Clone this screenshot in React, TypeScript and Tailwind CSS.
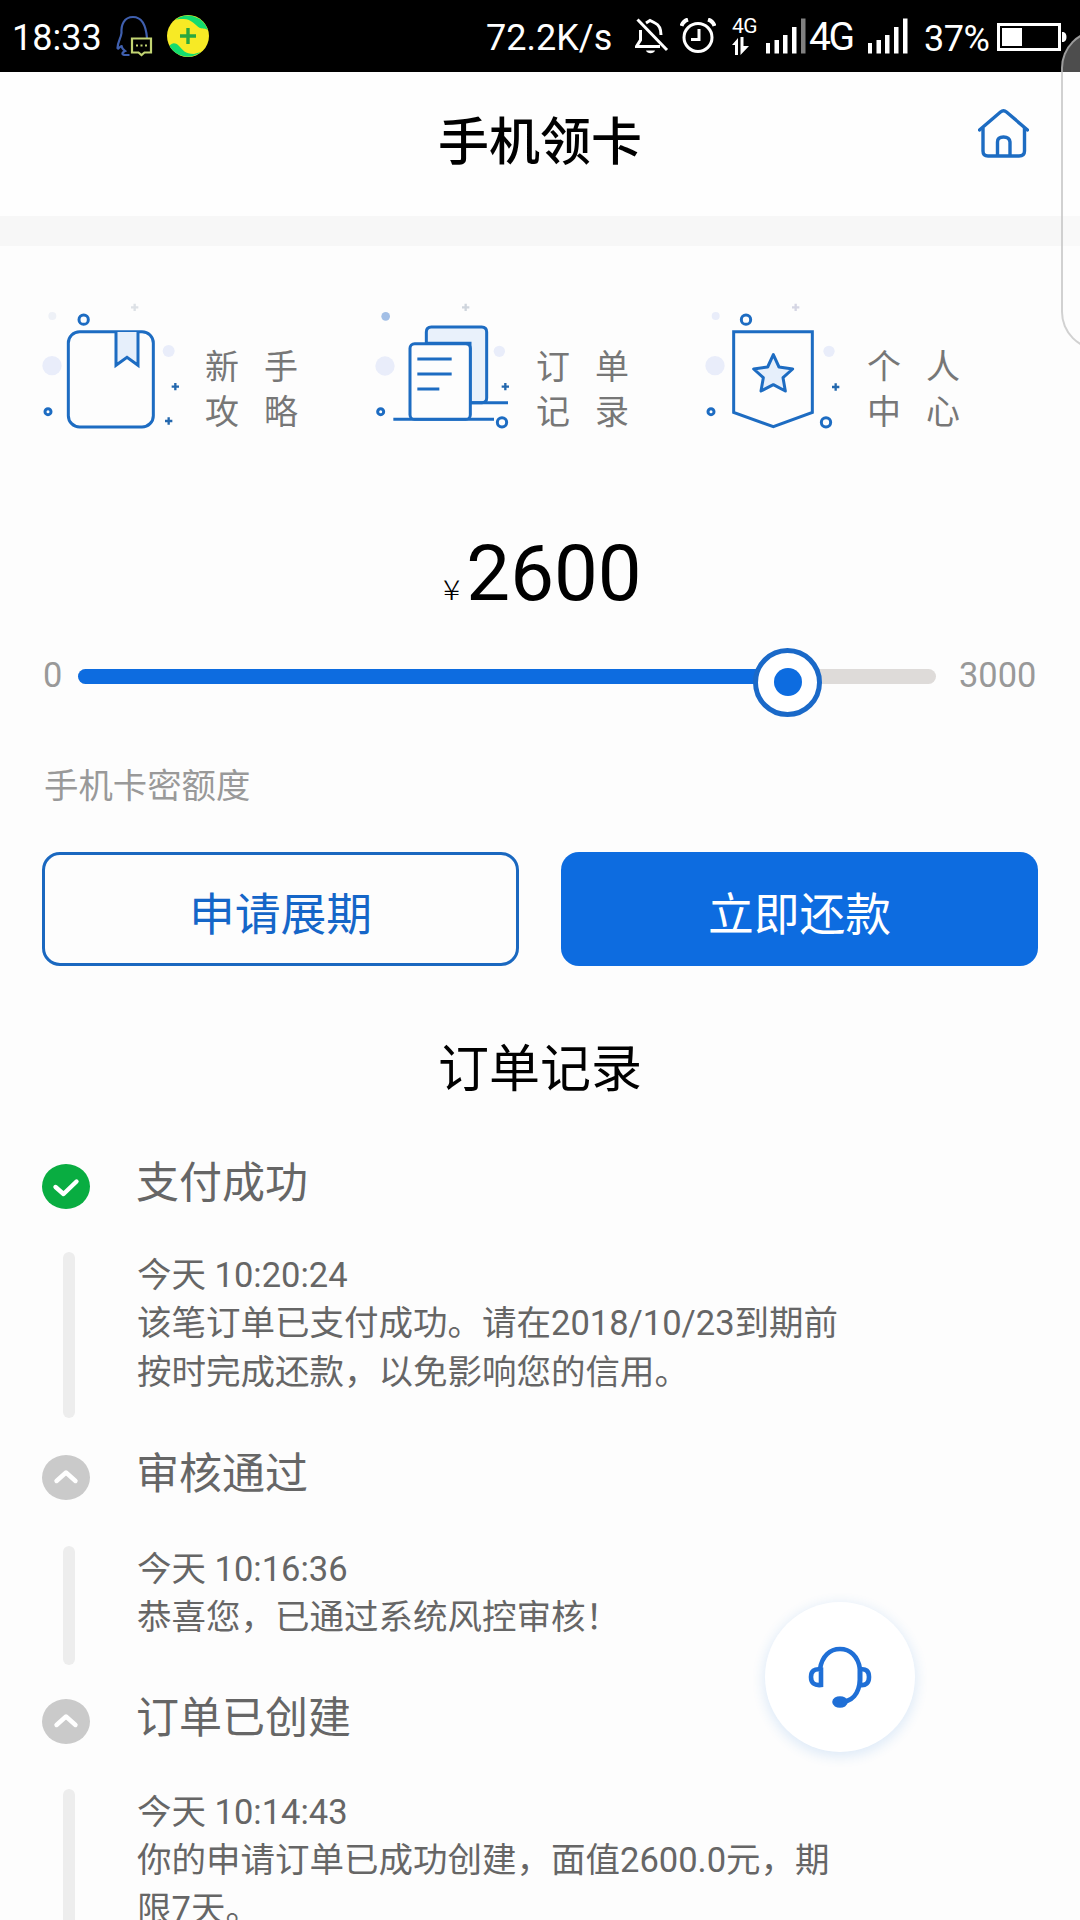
import { ReactNode } from "react";

const orders = [
  {
    id: 1,
    title: "支付成功",
    time: "今天 10:20:24",
    lines: ["该笔订单已支付成功。请在2018/10/23到期前", "按时完成还款，以免影响您的信用。"],
    done: true,
    head: "h-[88px]",
    bar: "h-[166px]",
    wrap: "h-[291px]",
  },
  {
    id: 2,
    title: "审核通过",
    time: "今天 10:16:36",
    lines: ["恭喜您，已通过系统风控审核！"],
    done: false,
    head: "h-[91px]",
    bar: "h-[119px]",
    wrap: "h-[244px]",
  },
  {
    id: 3,
    title: "订单已创建",
    time: "今天 10:14:43",
    lines: ["你的申请订单已成功创建，面值2600.0元，期", "限7天。"],
    done: false,
    head: "h-[90px]",
    bar: "h-[166px]",
    wrap: "h-[291px]",
  },
];

function SignalBars({ weak }: { weak?: boolean }) {
  return (
    <svg width="40" height="36" viewBox="0 0 40 36" fill="#fff">
      <rect x="0" y="25" width="4" height="10.5" />
      <rect x="8.5" y="22" width="4.5" height="13.5" />
      <rect x="17" y="17" width="4.5" height="18.5" />
      <rect x="26" y="9" width="4.5" height="26.5" />
      <rect x="35" y="0.5" width="4.5" height="35" fill={weak ? "#808080" : "#fff"} />
    </svg>
  );
}

function StatusBar() {
  return (
    <div className="flex h-[72px] items-center justify-between bg-black pl-[12px] pr-[12px] text-[36px] leading-none text-white">
      <div className="flex items-center">
        <span className="w-[104px] pt-[4px]">18:33</span>
        <svg width="38" height="42" viewBox="0 0 38 42" fill="none">
          <path
            d="M31 23C30 11 26 2 17 2C8 2 5 10 5.500 18C5 23 1.500 27 1.500 33C2.500 35 4 31 5.500 31C6 34 7.500 35 9 36C5 38 6 40 9.500 40H13.500"
            stroke="#3f5fae"
            strokeWidth="2.2"
          />
          <path d="M16 23.500H35V37.500H28.500L25.500 40L22.500 37.500H16Z" stroke="#c2d472" strokeWidth="2.2" />
          <path d="M20 30.500H22M24.500 30.500H26.500M29 30.500H31" stroke="#c2d472" strokeWidth="2" />
        </svg>
        <svg className="ml-[13px]" width="42" height="42" viewBox="0 0 42 42">
          <circle cx="21" cy="21" r="21" fill="#f7ea25" />
          <path d="M8 5A21 21 0 0 1 41 15C38 13 36 14 33 13C28 10 24 3 15 4C12 4 10 4 8 5Z" fill="#13dc6e" />
          <path d="M34 37A21 21 0 0 1 2.500 31C5 27 9 28 11 30C16 35 18 39 27 39Z" fill="#13dc6e" />
          <path d="M21 13V29M13 21H29" stroke="#2aa83f" strokeWidth="3.4" />
        </svg>
      </div>
      <div className="flex items-center">
        <span className="w-[149px] pt-[4px]">72.2K/s</span>
        <svg width="34" height="36" viewBox="0 0 34 36" fill="none" stroke="#fff" strokeWidth="3">
          <path d="M2.500 1.500L32 32" />
          <path d="M11 5L15 2.500L20 5C24.500 7 26 11 26 17" />
          <path d="M5.500 12V22L1.500 28.500H25" />
          <path d="M11 32.500H20C19 36 12 36 11 32.500Z" fill="#fff" stroke="none" />
        </svg>
        <svg className="ml-[11px]" width="36" height="36" viewBox="0 0 36 36" fill="none" stroke="#fff" strokeWidth="3">
          <circle cx="18" cy="19.500" r="14" />
          <path d="M19 11V21.500H11" />
          <path d="M1.500 8Q3 3 8 1.500M28 1.500Q33 3 34.500 8" strokeWidth="4" />
        </svg>
        <div className="ml-[16px] flex h-[38px] w-[34px] flex-col">
          <span className="text-[21px] leading-[19px] tracking-tight">4G</span>
          <svg className="mt-px" width="18" height="18" viewBox="0 0 18 18" fill="#fff">
            <path d="M0 8L6 1V18H3V8Z" />
            <path d="M8.500 0H11.500V9H17L8.500 18Z" />
          </svg>
        </div>
        <SignalBars weak />
        <span className="ml-[3px] w-[59px] pt-[2px] text-[39px] tracking-[-2.500px]">4G</span>
        <SignalBars />
        <span className="ml-[16px] w-[73px] pt-[5px] text-[36px] tracking-[-0.500px]">37%</span>
        <svg className="mt-[2px]" width="71" height="28" viewBox="0 0 71 28" fill="none">
          <rect x="1.500" y="1.500" width="61" height="25" stroke="#fff" strokeWidth="3" />
          <rect x="5" y="5" width="20" height="18" fill="#fff" />
          <path d="M65 9H66.500Q69.500 10 69.500 14T66.500 19H65Z" fill="#fff" />
        </svg>
      </div>
    </div>
  );
}

function Plus({ x, y, color = "#2468ae" }: { x: number; y: number; color?: string }) {
  return <path d={`M${x - 11} ${y}h22M${x} ${y - 11}v22`} stroke={color} strokeWidth="7" fill="none" />;
}

function GuideIcon() {
  return (
    <svg width="143" height="133" viewBox="60 30 429 399" fill="none" stroke="#1d6cc2" strokeWidth="9">
      <g stroke="none" fill="#e9edfa">
        <circle cx="97" cy="78" r="12" fill="#eef1f7" />
        <circle cx="96" cy="227" r="29" />
        <circle cx="446" cy="183" r="18" />
      </g>
      <rect x="145" y="125" width="255" height="286" rx="34" />
      <path d="M288 126V226L321 202L354 226V126" fill="#e6effb" />
      <circle cx="191" cy="89" r="14" />
      <circle cx="84" cy="365" r="9" />
      <Plus x={344} y={52} color="#dde1e6" />
      <Plus x={466} y={290} />
      <Plus x={446} y={393} />
    </svg>
  );
}

function OrderIcon() {
  return (
    <svg width="143" height="133" viewBox="63 30 429 399" fill="none" stroke="#1d6cc2" strokeWidth="9">
      <g stroke="none" fill="#e9edfa">
        <circle cx="107" cy="79" r="13" fill="#a3bfe6" />
        <circle cx="105" cy="228" r="29" />
        <circle cx="448" cy="184" r="17" />
      </g>
      <path d="M229 160V126Q229 111 244 111H395Q410 111 410 126V324Q410 338 396 338H360V160Z" fill="#e9f1fb" />
      <path d="M360 338H474M130 388H432" />
      <rect x="180" y="161" width="181" height="227" rx="14" fill="#fdfdfd" />
      <path d="M202 207H305M202 252H305M202 297H268" />
      <circle cx="92" cy="365" r="9" />
      <circle cx="456" cy="397" r="14" />
      <Plus x={347} y={52} color="#cfd5dd" />
      <Plus x={466} y={290} />
    </svg>
  );
}

function ProfileIcon() {
  return (
    <svg width="143" height="133" viewBox="66 30 429 399" fill="none" stroke="#1d6cc2" strokeWidth="9">
      <g stroke="none" fill="#e9edfa">
        <circle cx="107" cy="78" r="12" />
        <circle cx="105" cy="227" r="29" />
        <circle cx="447" cy="184" r="17" />
      </g>
      <path d="M161 125H397V367L280 410L161 367Z" />
      <path
        d="M280 194L297 231L338 237L309 263L316 303L280 284L243 303L250 263L221 237L263 231Z"
        fill="#e6effb"
        strokeLinejoin="round"
      />
      <circle cx="198" cy="89" r="14" />
      <circle cx="93" cy="365" r="9" />
      <circle cx="438" cy="397" r="14" />
      <Plus x={347} y={52} color="#d5d6e4" />
      <Plus x={467} y={291} />
    </svg>
  );
}

function NavItem({ icon, lines }: { icon: ReactNode; lines: string[] }) {
  return (
    <div className="flex w-[331px]">
      {icon}
      <div className="ml-[22px] mt-[45px] flex flex-col text-[34px] leading-[45px] tracking-[25px] text-[#777]">
        {lines.map((line) => (
          <span key={line}>{line}</span>
        ))}
      </div>
    </div>
  );
}

function StepIcon({ done }: { done: boolean }) {
  return (
    <svg width="48" height="46" viewBox="0 0 48 46" fill="none" strokeLinecap="round" strokeLinejoin="round">
      <ellipse cx="24" cy="22.5" rx="24" ry="22.5" fill={done ? "#09ad41" : "#cacaca"} />
      <path d={done ? "M13.500 23L21.500 30L34.500 17.500" : "M14.500 26L24 17.500L33.500 26"} stroke="#fff" strokeWidth="4.4" />
    </svg>
  );
}

export default function App() {
  return (
    <div className="relative h-[1920px] w-[1080px] overflow-hidden bg-[#fdfdfd] font-['Roboto','Noto_Sans_CJK_SC',sans-serif]">
      <StatusBar />
      <header className="flex h-[144px] items-start justify-between bg-[#fefefe] px-[51px]">
        <div className="w-[51px]" />
        <h1 className="mt-[41px] text-[51px] font-medium leading-[60px] text-black">手机领卡</h1>
        <svg className="mt-[36px]" width="51" height="51" viewBox="0 0 51 51" fill="none" stroke="#1d6cc2" strokeWidth="3.4">
          <path d="M1.500 22L22.500 4Q25.500 1.500 28.500 4L49.500 22" strokeLinecap="round" />
          <path d="M5 20V43Q5 48 10 48H41Q46.500 48 46.500 43V20" />
          <path d="M19.500 48V34Q19.500 29 25.500 29T32 34V48" />
        </svg>
      </header>
      <div className="h-[30px] bg-[#f7f7f7]" />

      <nav className="flex h-[187px] pl-[40px] pt-[54px]">
        <NavItem icon={<GuideIcon />} lines={["新手", "攻略"]} />
        <NavItem icon={<OrderIcon />} lines={["订单", "记录"]} />
        <NavItem icon={<ProfileIcon />} lines={["个人", "中心"]} />
      </nav>

      <section className="mt-[102px] px-[42px]">
        <div className="flex items-baseline justify-center pl-[5px] text-black">
          <span className="mr-[8px] origin-left scale-x-115 font-['Noto_Sans_CJK_SC'] text-[28px] font-light leading-none">
            ¥
          </span>
          <span className="text-[78px] leading-[78px]">2600</span>
        </div>
        <div className="mt-[29px] flex h-[68px] items-center text-[34.400px] leading-none text-[#999]">
          <span className="-mt-[2px] w-[36px] pl-[1px]">0</span>
          <div className="relative h-[15px] w-[858px] rounded-full bg-[#dedbd9]">
            <div className="h-[15px] w-[690px] rounded-l-full bg-[#0d6ce0]" />
            <div className="absolute -top-[21px] left-[675px] flex size-[69px] items-center justify-center rounded-full border-[5px] border-[#1a69c8] bg-white">
              <div className="size-[28px] rounded-full bg-[#0d6ce0]" />
            </div>
          </div>
          <span className="-mt-[2px] ml-[23px]">3000</span>
        </div>
        <p className="mt-[52px] pl-[2px] text-[34.400px] leading-[48px] text-[#999]">手机卡密额度</p>
        <div className="mt-[42px] grid grid-cols-2 gap-[42px] text-[45.800px]">
          <button className="h-[114px] rounded-[18px] border-[3px] border-[#1a68c0] pt-[14px] text-[#1566c8]">
            申请展期
          </button>
          <button className="h-[114px] rounded-[18px] bg-[#0d6ce0] pt-[14px] text-white">立即还款</button>
        </div>
      </section>

      <h2 className="mt-[74px] text-center text-[51px] leading-[60px] text-black">订单记录</h2>

      <section className="mt-[64px] px-[42px] text-[#666]">
        {orders.map((order) => (
          <div key={order.id} className={order.wrap}>
            <div className={`flex items-start ${order.head}`}>
              <StepIcon done={order.done} />
              <h3 className="-mt-[11px] ml-[46px] text-[43px] leading-[60px]">{order.title}</h3>
            </div>
            <div className="flex items-start">
              <div className={`ml-[21px] w-[12px] rounded-full bg-[#ededed] ${order.bar}`} />
              <div className="-mt-px ml-[62px] text-[34.500px] leading-[48.300px]">
                <p>{order.time}</p>
                {order.lines.map((line) => (
                  <p key={line}>{line}</p>
                ))}
              </div>
            </div>
          </div>
        ))}
      </section>

      <button className="absolute left-[765px] top-[1602px] flex size-[150px] items-center justify-center rounded-full bg-white shadow-[0_3px_12px_2px_rgba(40,130,220,0.14)]">
        <svg width="66" height="66" viewBox="0 0 66 66" fill="none" stroke="#1f6fd6" strokeWidth="4.6">
          <path d="M13 25C15 12 23 5 33 5S51 12 53 25V36C52 50 45 58 33 58" />
          <path d="M14 25.500Q4 24 4 33Q4 42 14 41Z" />
          <path d="M53 25.500Q62 24 62 33Q62 42 53 41Z" />
          <ellipse cx="33" cy="58" rx="5.500" ry="3.500" fill="#1f6fd6" />
        </svg>
      </button>

      {/* edge panel handle */}
      <div className="absolute -right-[57px] top-[30px] h-[320px] w-[76px] rounded-[54px] border-[2px] border-[#bdbdbd]/70 bg-white/30" />
    </div>
  );
}
